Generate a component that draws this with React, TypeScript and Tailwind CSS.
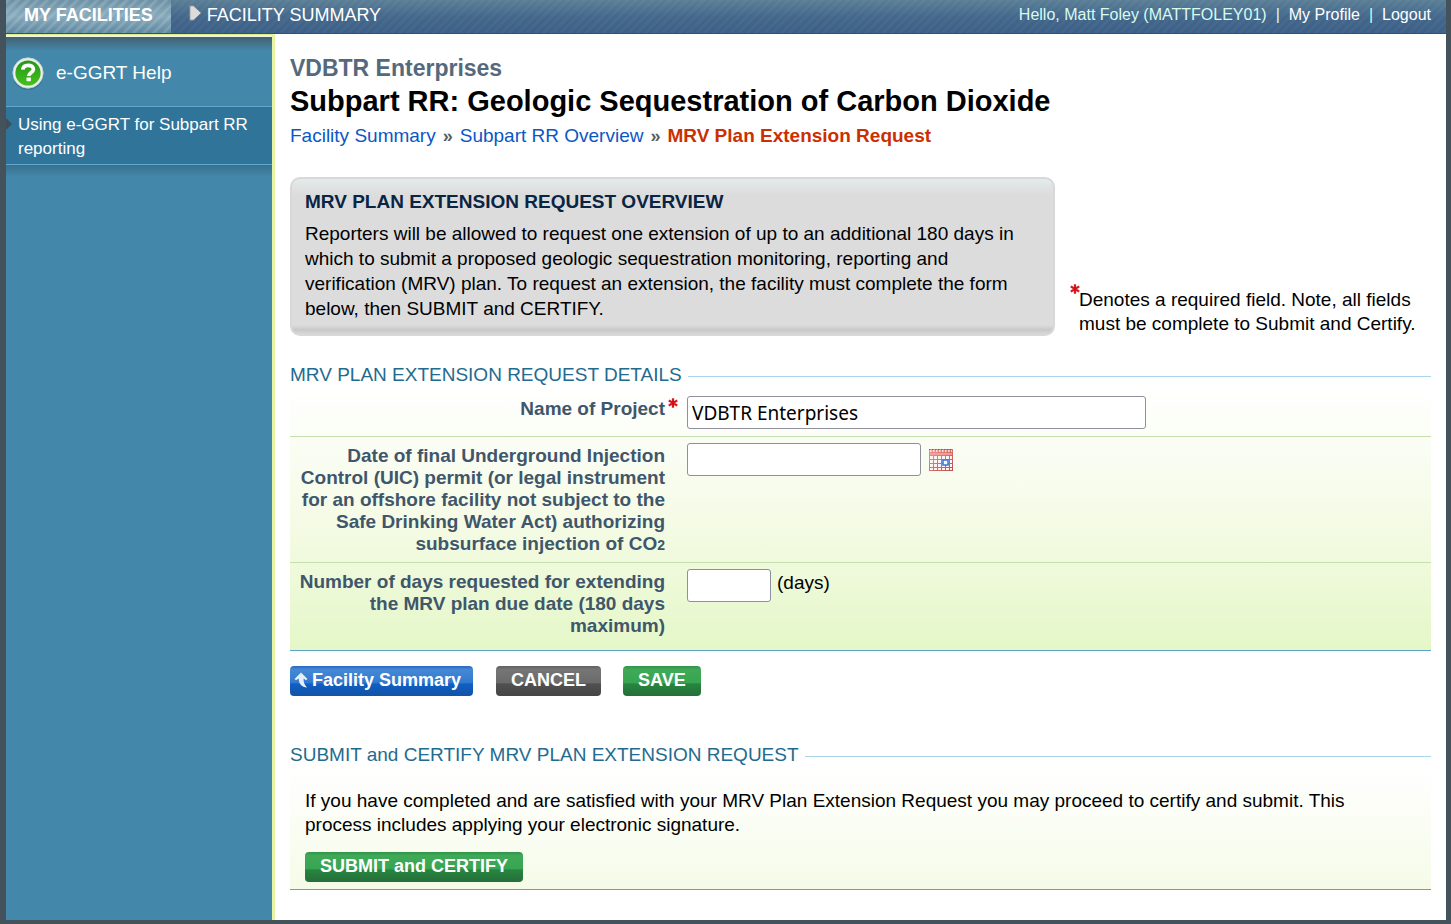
import type { ReactNode } from "react";

function RequiredMark() {
  return (
    <svg viewBox="0 0 10 10" className="h-[10px] w-[10px] shrink-0" role="img" aria-label="required">
      <path d="M5 0v10M.6 2.300l8.800 5.400M9.400 2.300l-8.800 5.400" stroke="#f0a0a0" strokeWidth="2.6" fill="none" />
      <path d="M5 .5v9M1 2.500l8 5M9 2.500l-8 5" stroke="#d2101c" strokeWidth="1.9" fill="none" />
    </svg>
  );
}

function HelpIcon() {
  return (
    <svg viewBox="0 0 34 34" className="h-[34px] w-[34px] shrink-0" aria-hidden="true">
      <defs>
        <linearGradient id="help-green" x1="0" y1="0" x2="0" y2="1">
          <stop offset="0" stopColor="#27961b" />
          <stop offset="1" stopColor="#45c01a" />
        </linearGradient>
      </defs>
      <circle cx="17" cy="18.5" r="15.5" fill="#2a6480" opacity=".5" />
      <circle cx="17" cy="17" r="15.2" fill="#e9efe9" stroke="#b9cbc6" strokeWidth=".8" />
      <circle cx="17" cy="17" r="12.6" fill="url(#help-green)" />
      <path
        d="M11.800 13.600c.2-2.900 2.400-4.300 5.300-4.300 3.100 0 5.300 1.500 5.300 4 0 3.600-4.700 3.400-4.700 6.700"
        fill="none"
        stroke="#fff"
        strokeWidth="3.7"
      />
      <rect x="15.5" y="21.600" width="4.4" height="3.600" rx=".6" fill="#fff" />
    </svg>
  );
}

function CalendarIcon() {
  return (
    <svg viewBox="0 0 24 22" className="h-[22px] w-[24px]" aria-hidden="true">
      <defs>
        <linearGradient id="cal-red" x1="0" y1="0" x2="1" y2="1">
          <stop offset="0" stopColor="#f9938e" />
          <stop offset="1" stopColor="#b8504c" />
        </linearGradient>
      </defs>
      <rect width="24" height="22" fill="url(#cal-red)" />
      <path d="M1 2h22" stroke="#fff" strokeWidth="1.4" strokeDasharray="1.5 1.5" />
      <path d="M0 .5h24" stroke="#8a5a58" strokeDasharray="1.5 1.5" />
      <path d="M1 5h22" stroke="#f4aaa5" strokeWidth="1.5" />
      {[7, 11, 15, 19].map((y) =>
        [1, 5, 9, 13, 17, 21].map((x) => (
          <rect key={`${x}-${y}`} x={x} y={y} width={x === 21 ? 2 : 3} height={y === 19 ? 2 : 3} fill="#fff4f2" />
        )),
      )}
      <rect x="14" y="11" width="5" height="5" fill="#fff" stroke="#3f7be6" strokeWidth="1.6" />
    </svg>
  );
}

function UpArrowIcon() {
  return (
    <svg viewBox="0 0 14 16" className="h-4 w-[14px] shrink-0" aria-hidden="true">
      <path d="M7 .5l6.500 6.500-1.500 1.200-2.400-1.700c-.2 3.500.6 6 3.400 9C8 15 4.800 12.500 4.700 6.500L2 8.200.5 7z" fill="#e4effb" />
    </svg>
  );
}

function SectionTitle({ children }: { children: ReactNode }) {
  return (
    <h2 className="flex h-6 items-center gap-[6px] text-[19px] text-[#236b8e]">
      {children}
      <span className="mt-[2px] h-px flex-1 bg-[#aad5ea]" />
    </h2>
  );
}

const buttonBase = "flex h-[30px] items-center rounded-[4px] pb-[2px] text-[18px] font-bold text-white";
const greenButton =
  "bg-[linear-gradient(#2f9448,#3fa957_12%,#37a552_55%,#278540_60%,#256f38)] px-[15px]";

const fieldBase = "h-[33px] rounded-[3px] border border-[#8f8f9d] bg-white px-1";
const labelBase =
  "w-[375px] shrink-0 text-right text-[19px] leading-[22px] font-bold text-[#40566a] pt-[2px]";

export default function App() {
  return (
    <div className="flex min-h-screen flex-col bg-[#44535b] pr-[5px] pb-1 pl-[6px] font-['Liberation_Sans',Arial,sans-serif] text-black">
      <header className="flex h-[34px] items-stretch justify-between border-b border-[#38506a] bg-[repeating-linear-gradient(135deg,rgba(255,255,255,0.03)_0_3px,transparent_3px_6px),linear-gradient(#5b7f97,#43688c_50%,#3b5f86)] text-white">
        <nav className="flex items-stretch text-[18px] leading-[30px]">
          <a
            href="#facilities"
            className="bg-[repeating-linear-gradient(135deg,rgba(255,255,255,0.13)_0_3px,transparent_3px_7px),linear-gradient(#6f93a6,#87aabc_50%,#6189a2)] px-[18px] font-bold"
          >
            MY FACILITIES
          </a>
          <a href="#summary" className="flex gap-[5px] pl-[18px]">
            <svg viewBox="0 0 13 16" className="mt-[5px] h-4 w-[13px]" aria-hidden="true">
              <path d="M.8.800H4.500L12.300 8 4.500 15.200H.8z" fill="#dcdcda" stroke="#77828a" strokeWidth=".9" />
            </svg>
            FACILITY SUMMARY
          </a>
        </nav>
        <div className="flex gap-[9px] pr-[15px] text-[16px] leading-[30px]">
          <span className="text-[#d8fbf0]">Hello, Matt Foley (MATTFOLEY01)</span>
          <span className="text-[#d8fbf0]">|</span>
          <a href="#profile">My Profile</a>
          <span className="text-[#d8fbf0]">|</span>
          <a href="#logout">Logout</a>
        </div>
      </header>

      <div className="flex flex-1 bg-white">
        <aside className="flex w-[269px] shrink-0 flex-col border-r-[3px] border-[#e8f3a6] bg-[#4388ab]">
          <div className="h-[3px] border-t border-[#dcee8c] bg-[#eef4e4]" />
          <a
            href="#help"
            className="flex h-[69px] items-center gap-[11px] bg-[linear-gradient(#446070,#4388ab_14px)] pt-[3px] pl-[5px] text-[19px] text-white"
          >
            <HelpIcon />
            e-GGRT Help
          </a>
          <a
            href="#guide"
            className="relative block border-y border-[#5fa9cf] bg-[#31749a] px-3 pt-[6px] pb-[3px] text-[17px] leading-6 text-white"
          >
            <svg viewBox="0 0 6 12" className="absolute top-[11px] left-0 h-3 w-[6px]" aria-hidden="true">
              <path d="M0 0l6 6-6 6z" fill="#3f4f58" />
            </svg>
            Using e-GGRT for Subpart RR reporting
          </a>
          <div className="h-3 bg-linear-to-b from-[#39708c] to-[#4388ab]" />
        </aside>

        <main className="flex-1 pt-5 pr-[15px] pb-[30px] pl-[15px]">
          <p className="text-[23px] leading-7 font-bold text-[#56697c]">VDBTR Enterprises</p>
          <h1 className="text-[29px] leading-[38px] font-bold">Subpart RR: Geologic Sequestration of Carbon Dioxide</h1>
          <nav aria-label="Breadcrumb" className="flex gap-[7px] text-[19px] leading-8 text-[#0b57c4]">
            <a href="#summary">Facility Summary</a>
            <span className="text-[18px] font-bold text-[#555f66]">»</span>
            <a href="#overview">Subpart RR Overview</a>
            <span className="text-[18px] font-bold text-[#555f66]">»</span>
            <span className="font-bold text-[#cc2f00]">MRV Plan Extension Request</span>
          </nav>

          <div className="mt-[25px] flex items-end gap-[15px]">
            <section className="w-[765px] rounded-[10px] border-2 border-[#d8d8d8] bg-[linear-gradient(#e4eaea,#dcdcdc_16px,#dcdcdc_calc(100%-9px),#c8c8c8_calc(100%-4px),#d8d8d8)] px-[13px] pt-[9px] pb-[13px]">
              <h2 className="text-[19px] leading-[28px] font-bold text-[#0a2444]">MRV PLAN EXTENSION REQUEST OVERVIEW</h2>
              <p className="mt-[5px] text-[19px] leading-[25px]">
                Reporters will be allowed to request one extension of up to an additional 180 days in which to submit a
                proposed geologic sequestration monitoring, reporting and verification (MRV) plan. To request an
                extension, the facility must complete the form below, then SUBMIT and CERTIFY.
              </p>
            </section>
            <p className="relative flex-1 pl-[9px] text-[19px] leading-6">
              <span className="absolute -top-1 left-0">
                <RequiredMark />
              </span>
              Denotes a required field. Note, all fields must be complete to Submit and Certify.
            </p>
          </div>

          <form className="mt-[27px]" onSubmit={(e) => e.preventDefault()}>
            <SectionTitle>MRV PLAN EXTENSION REQUEST DETAILS</SectionTitle>
            <div className="border-b border-[#5aa5c8] bg-linear-to-b from-white via-[#f5fbe6] to-[#e5f7c8] pt-[3px]">
              <div className="flex border-b border-[#c5dfae] pt-[6px] pb-[7px]">
                <label htmlFor="project" className={labelBase}>
                  Name of Project
                </label>
                <span className="w-[22px] shrink-0 pt-[2px] pl-[3px]">
                  <RequiredMark />
                </span>
                <input
                  id="project"
                  defaultValue="VDBTR Enterprises"
                  className={`${fieldBase} w-[459px] font-['Noto_Sans',sans-serif] text-[19px]`}
                />
              </div>
              <div className="flex border-b border-[#c5dfae] pt-[6px] pb-[6px]">
                <label htmlFor="permit-date" className={`${labelBase} mr-[22px] pl-1`}>
                  Date of final Underground Injection Control (UIC) permit (or legal instrument for an offshore facility
                  not subject to the Safe Drinking Water Act) authorizing subsurface injection of CO
                  <span className="text-[14px]">2</span>
                </label>
                <input id="permit-date" className={`${fieldBase} w-[234px]`} />
                <button type="button" aria-label="Choose date" className="ml-2 flex h-[33px] items-center">
                  <CalendarIcon />
                </button>
              </div>
              <div className="flex pt-[6px] pb-[13px]">
                <label htmlFor="days" className={`${labelBase} mr-[22px] pl-1`}>
                  Number of days requested for extending the MRV plan due date (180 days maximum)
                </label>
                <input id="days" className={`${fieldBase} w-[84px]`} />
                <span className="ml-[6px] text-[19px] leading-[28px]">(days)</span>
              </div>
            </div>
            <div className="mt-[15px] flex">
              <button
                type="button"
                className={`${buttonBase} bg-[linear-gradient(#2a68bd,#4588d6_12%,#3179d0_55%,#0f5fc2_60%,#1253a6)] gap-1 pr-3 pl-1`}
              >
                <UpArrowIcon />
                Facility Summary
              </button>
              <button
                type="button"
                className={`${buttonBase} ml-[23px] bg-[linear-gradient(#606060,#757575_12%,#6b6b6b_55%,#505050_60%,#454545)] px-[15px]`}
              >
                CANCEL
              </button>
              <button type="submit" className={`${buttonBase} ${greenButton} ml-[22px]`}>
                SAVE
              </button>
            </div>
          </form>

          <section className="mt-[47px]">
            <SectionTitle>SUBMIT and CERTIFY MRV PLAN EXTENSION REQUEST</SectionTitle>
            <div className="border-b border-[#5aa5c8] bg-linear-to-b from-white to-[#f6fbe8] px-[15px] pt-[22px] pb-[7px]">
              <p className="text-[19px] leading-6">
                If you have completed and are satisfied with your MRV Plan Extension Request you may proceed to certify
                and submit. This process includes applying your electronic signature.
              </p>
              <button type="button" className={`${buttonBase} ${greenButton} mt-[15px]`}>
                SUBMIT and CERTIFY
              </button>
            </div>
          </section>
        </main>
      </div>
    </div>
  );
}
